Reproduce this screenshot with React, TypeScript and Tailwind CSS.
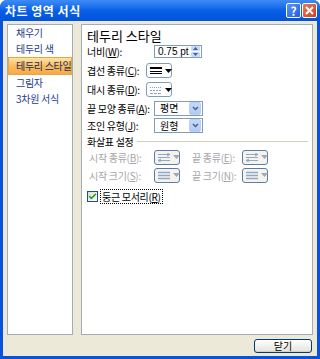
import { Check } from 'lucide-react'

const font = { fontFamily: '"Noto Sans CJK KR", "Noto Sans", sans-serif' }

function DropArrow({ disabled = false }: { disabled?: boolean }) {
  return (
    <svg width="7" height="4" viewBox="0 0 7 4" className="shrink-0">
      <path d="M0 0h7L3.5 4z" fill={disabled ? '#A7A6AA' : '#000'} />
    </svg>
  )
}

function LineButton({ kind, disabled = false }: { kind: 'compound' | 'dash' | 'arrow' | 'size'; disabled?: boolean }) {
  const c = disabled ? '#8FA8C8' : '#41578A'
  return (
    <div
      className={`shrink-0 w-[26px] h-[15px] rounded-[3px] border flex items-center gap-[3px] pl-[3px] ${
        disabled ? 'border-[#5C7CA6] bg-[#F4F3EE]' : 'border-[#7F9DB9] bg-white'
      }`}
    >
      <svg width="12" height="9" viewBox="0 0 12 9" className="shrink-0">
        {kind === 'compound' && (
          <>
            <rect x="0" y="1" width="12" height="2" fill="#000" />
            <rect x="0" y="5" width="12" height="1" fill="#000" />
            <rect x="0" y="7" width="12" height="1" fill="#000" />
          </>
        )}
        {kind === 'dash' && (
          <>
            <path d="M0 2.5h12" stroke="#8AA0C8" strokeDasharray="1 1" />
            <path d="M0 5.5h12" stroke="#8AA0C8" strokeDasharray="2 1" />
            <path d="M0 8.5h12" stroke="#8AA0C8" strokeDasharray="3 1" />
          </>
        )}
        {kind === 'arrow' && (
          <>
            <path d="M0 1.5h12M0 4.5h12M0 7.5h12" stroke={c} />
            <path d="M9 0l3 1.5L9 3M3 6l-3 1.5L3 9" fill="none" stroke={c} />
          </>
        )}
        {kind === 'size' && <path d="M0 1.5h12M0 4.5h12M0 7.5h12" stroke={c} strokeWidth="1.4" />}
      </svg>
      <DropArrow disabled={disabled} />
    </div>
  )
}

function Select({ value }: { value: string }) {
  return (
    <div className="shrink-0 w-[49px] h-[15px] border border-[#7F9DB9] bg-white flex items-center">
      <span className="flex-1 pl-[5px] text-[10px] leading-none whitespace-nowrap">{value}</span>
      <div className="w-[12px] h-[13px] mr-[1px] rounded-[2px] bg-gradient-to-b from-[#C5D8FC] to-[#B1CBF7] border border-[#B9CEF5] flex items-center justify-center">
        <svg width="7" height="5" viewBox="0 0 7 5">
          <path d="M1 1l2.5 2.5L6 1" fill="none" stroke="#4D6185" strokeWidth="1.5" />
        </svg>
      </div>
    </div>
  )
}

function Label({ text, u, w, className = '' }: { text: string; u: string; w: string; className?: string }) {
  return (
    <div className={`shrink-0 ${w} ${className}`}>
      <span className="block text-[10px] leading-[11px] whitespace-nowrap tracking-[-0.3px]">
        {text}(<u>{u}</u>):
      </span>
    </div>
  )
}

export default function App() {
  return (
    <div className="w-[320px] h-[359px] flex flex-col bg-[#0852DD] rounded-t-[7px] overflow-hidden" style={font}>
      <div className="h-[21px] shrink-0 flex items-center pl-[5px] pr-[3px] bg-gradient-to-b from-[#3D8CF7] via-[#0760E6] to-[#0352DB]">
        <span className="flex-1 text-white text-[12px] font-bold leading-none tracking-[0.5px] whitespace-nowrap">차트 영역 서식</span>
        <div className="flex gap-[1px]">
          <div className="w-[15px] h-[15px] rounded-[2px] border border-white bg-gradient-to-br from-[#5B93F6] to-[#1E5DE0] flex items-center justify-center text-white text-[12px] font-bold leading-none">
            ?
          </div>
          <div className="w-[15px] h-[15px] rounded-[2px] border border-white bg-gradient-to-br from-[#E87A5C] to-[#C9401B] flex items-center justify-center">
            <svg width="9" height="9" viewBox="0 0 9 9">
              <path d="M1 1l7 7M8 1l-7 7" stroke="white" strokeWidth="2" />
            </svg>
          </div>
        </div>
      </div>

      <div className="flex-1 mx-[3px] mb-[3px] bg-[#ECE9D8] flex flex-col pt-[3px] pl-[4px] pr-[4px]">
        <div className="flex gap-[8px] h-[311px]">
          <div className="shrink-0 w-[66px] border border-[#A5ACB5] bg-white flex flex-col text-[10px] leading-none whitespace-nowrap tracking-[-0.3px]">
            <div className="h-[16px] flex items-center pl-[8px] text-[#1E3E8C]">채우기</div>
            <div className="h-[16px] flex items-center pl-[8px] text-[#1E3E8C]">테두리 색</div>
            <div className="h-[18px] flex items-center pl-[7px] text-[#1E2A5A] bg-gradient-to-b from-[#FDE3A8] via-[#F9BE5C] to-[#F7A84A] border border-[#E9A640]">
              테두리 스타일
            </div>
            <div className="h-[16px] flex items-center pl-[8px] text-[#1E3E8C]">그림자</div>
            <div className="h-[16px] flex items-center pl-[8px] text-[#1E3E8C]">3차원 서식</div>
          </div>

          <div className="flex-1 border border-[#A5ACB5] bg-white pt-[4px] pl-[5px] pr-[4px] flex flex-col text-black">
            <div className="h-[13px] flex items-center text-[13px] leading-none whitespace-nowrap">테두리 스타일</div>
            <div className="h-[19px] flex items-center">
              <Label text="너비" u="W" w="w-[67px]" />
              <div className="shrink-0 w-[48px] h-[13px] border border-[#7F9DB9] flex items-center">
                <span className="flex-1 pl-[3px] text-[10px] leading-none whitespace-nowrap" style={{ fontFamily: '"Liberation Sans", sans-serif' }}>
                  0.75 pt
                </span>
                <div className="w-[9px] h-[11px] mr-[1px] flex flex-col gap-[1px]">
                  <div className="flex-1 bg-[#C5D8FC] rounded-[1px] flex items-center justify-center">
                    <svg width="5" height="3" viewBox="0 0 5 3"><path d="M0 3L2.5 0L5 3z" fill="#4D6185" /></svg>
                  </div>
                  <div className="flex-1 bg-[#C5D8FC] rounded-[1px] flex items-center justify-center">
                    <svg width="5" height="3" viewBox="0 0 5 3"><path d="M0 0L2.5 3L5 0z" fill="#4D6185" /></svg>
                  </div>
                </div>
              </div>
            </div>
            <div className="h-[19px] flex items-center">
              <Label text="겹선 종류" u="C" w="w-[59px]" />
              <LineButton kind="compound" />
            </div>
            <div className="h-[19px] flex items-center">
              <Label text="대시 종류" u="D" w="w-[59px]" />
              <LineButton kind="dash" />
            </div>
            <div className="h-[18px] flex items-center">
              <Label text="끝 모양 종류" u="A" w="w-[67px]" />
              <Select value="평면" />
            </div>
            <div className="h-[17px] flex items-center">
              <Label text="조인 유형" u="J" w="w-[67px]" />
              <Select value="원형" />
            </div>

            <div className="mt-[2px] h-[10px] flex items-center gap-[4px]">
              <span className="block text-[10px] leading-[11px] whitespace-nowrap tracking-[-0.3px]">화살표 설정</span>
              <div className="flex-1 h-px bg-[#D0D0BF]" />
            </div>

            <div className="mt-[2px] h-[18px] flex items-center text-[#A7A6AA]">
              <Label text="시작 종류" u="B" w="w-[67px]" className="pl-[2px]" />
              <LineButton kind="arrow" disabled />
              <Label text="끝 종류" u="E" w="w-[62px]" className="pl-[12px]" />
              <LineButton kind="arrow" disabled />
            </div>
            <div className="h-[18px] flex items-center text-[#A7A6AA]">
              <Label text="시작 크기" u="S" w="w-[67px]" className="pl-[2px]" />
              <LineButton kind="size" disabled />
              <Label text="끝 크기" u="N" w="w-[62px]" className="pl-[12px]" />
              <LineButton kind="size" disabled />
            </div>

            <div className="mt-[3px] h-[18px] flex items-center gap-[3px]">
              <div className="shrink-0 w-[11px] h-[11px] border border-[#1C5180] bg-gradient-to-br from-[#DCDBD5] to-white flex items-center justify-center">
                <Check size={9} strokeWidth={4} color="#21A121" />
              </div>
              <span className="block text-[10px] leading-[11px] whitespace-nowrap tracking-[-0.3px] outline outline-1 outline-dotted outline-black px-[1px] py-[1px]">
                둥근 모서리(<u>R</u>)
              </span>
            </div>
          </div>
        </div>

        <div className="flex justify-end mt-[4px] pr-[1px]">
          <div className="w-[58px] h-[14px] rounded-[3px] border border-[#003C74] bg-gradient-to-b from-white to-[#E3E2DA] shadow-[inset_0_-1px_0_#D6D0C5] flex items-center justify-center text-[10px] leading-none">
            닫기
          </div>
        </div>
      </div>
    </div>
  )
}
